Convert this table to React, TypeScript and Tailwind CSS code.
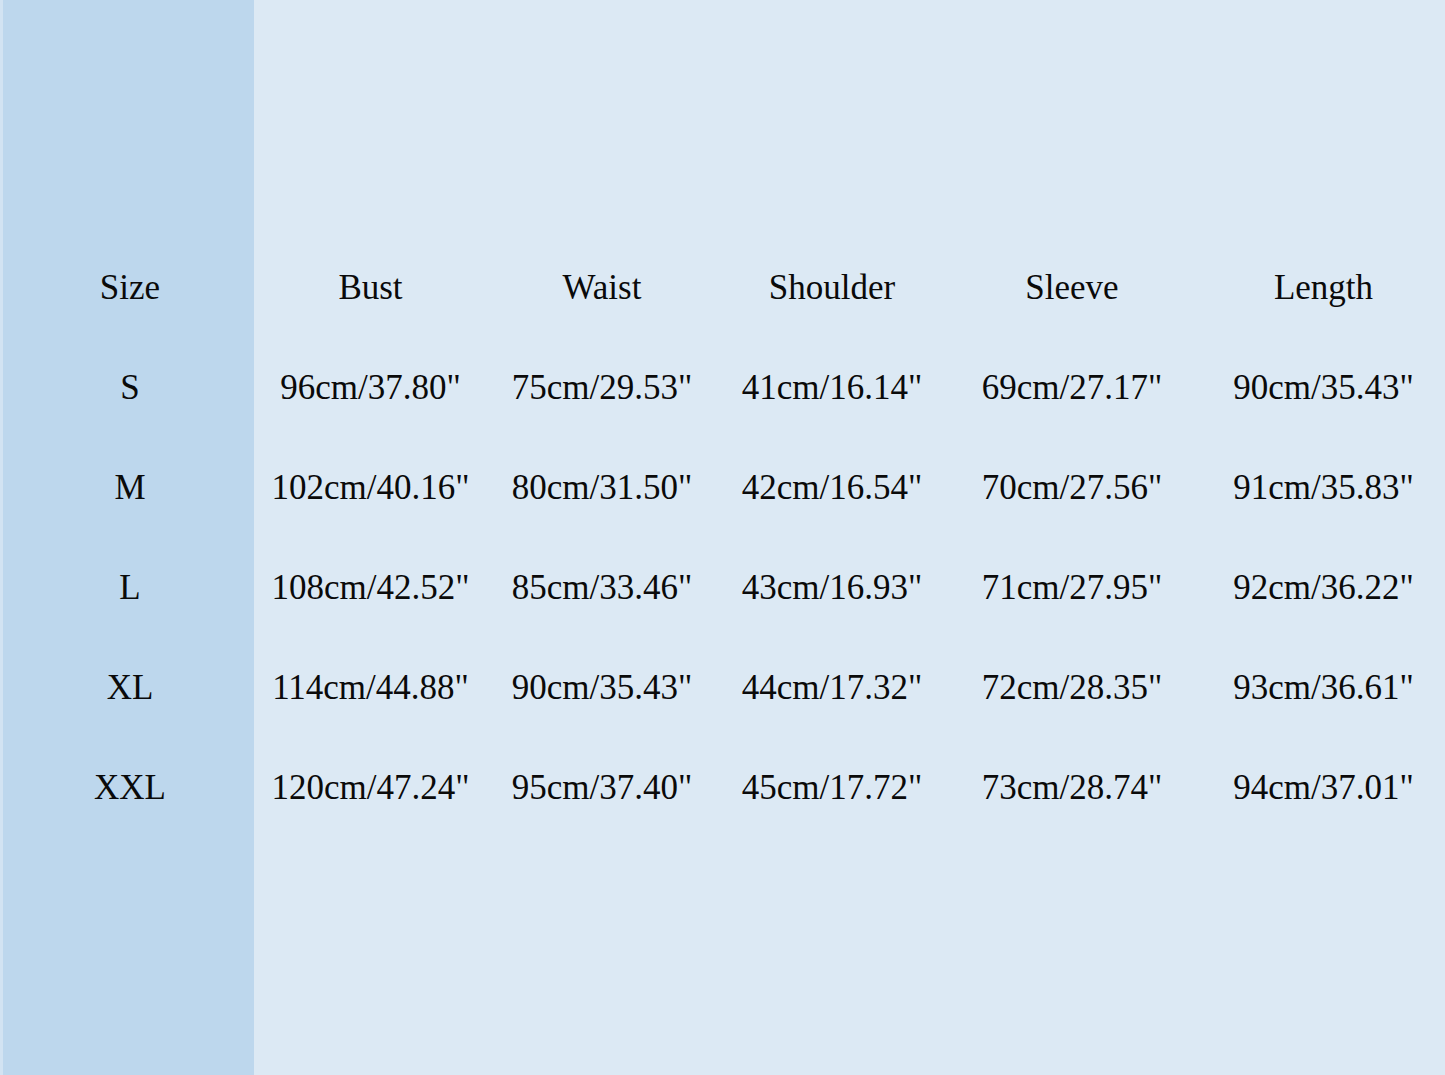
import React from "react";

const headers = ["Bust", "Waist", "Shoulder", "Sleeve", "Length"];
const sizes = ["S", "M", "L", "XL", "XXL"];
const rows = [
  ["96cm/37.80\"", "75cm/29.53\"", "41cm/16.14\"", "69cm/27.17\"", "90cm/35.43\""],
  ["102cm/40.16\"", "80cm/31.50\"", "42cm/16.54\"", "70cm/27.56\"", "91cm/35.83\""],
  ["108cm/42.52\"", "85cm/33.46\"", "43cm/16.93\"", "71cm/27.95\"", "92cm/36.22\""],
  ["114cm/44.88\"", "90cm/35.43\"", "44cm/17.32\"", "72cm/28.35\"", "93cm/36.61\""],
  ["120cm/47.24\"", "95cm/37.40\"", "45cm/17.72\"", "73cm/28.74\"", "94cm/37.01\""],
];

export default function App() {
  return (
    <div
      className="flex w-[1445px] h-[1075px] text-[35px] leading-[100px] text-[#0a0a0a] overflow-hidden"
      style={{ fontFamily: '"Liberation Serif", "Times New Roman", serif' }}
    >
      <div className="w-[3px] bg-[#d2e3f2]" />
      <div className="w-[251px] bg-[#bdd7ed] pt-[238px] pl-[3px] flex flex-col items-center">
        <div className="h-[100px]">Size</div>
        {sizes.map((s) => (
          <div key={s} className="h-[100px]">{s}</div>
        ))}
      </div>
      <div className="flex-1 bg-[#dce9f4] pt-[238px]">
        <div className="grid grid-cols-[233px_230px_230px_250px_1fr] text-center">
          {headers.map((h, i) => (
            <div key={h} className={i === 4 ? "h-[100px] pl-[5px]" : "h-[100px]"}>{h}</div>
          ))}
          {rows.map((r, ri) =>
            r.map((c, ci) => (
              <div key={ri + "-" + ci} className={ci === 4 ? "h-[100px] pl-[5px] whitespace-nowrap" : "h-[100px] whitespace-nowrap"}>
                {c}
              </div>
            ))
          )}
        </div>
      </div>
    </div>
  );
}
